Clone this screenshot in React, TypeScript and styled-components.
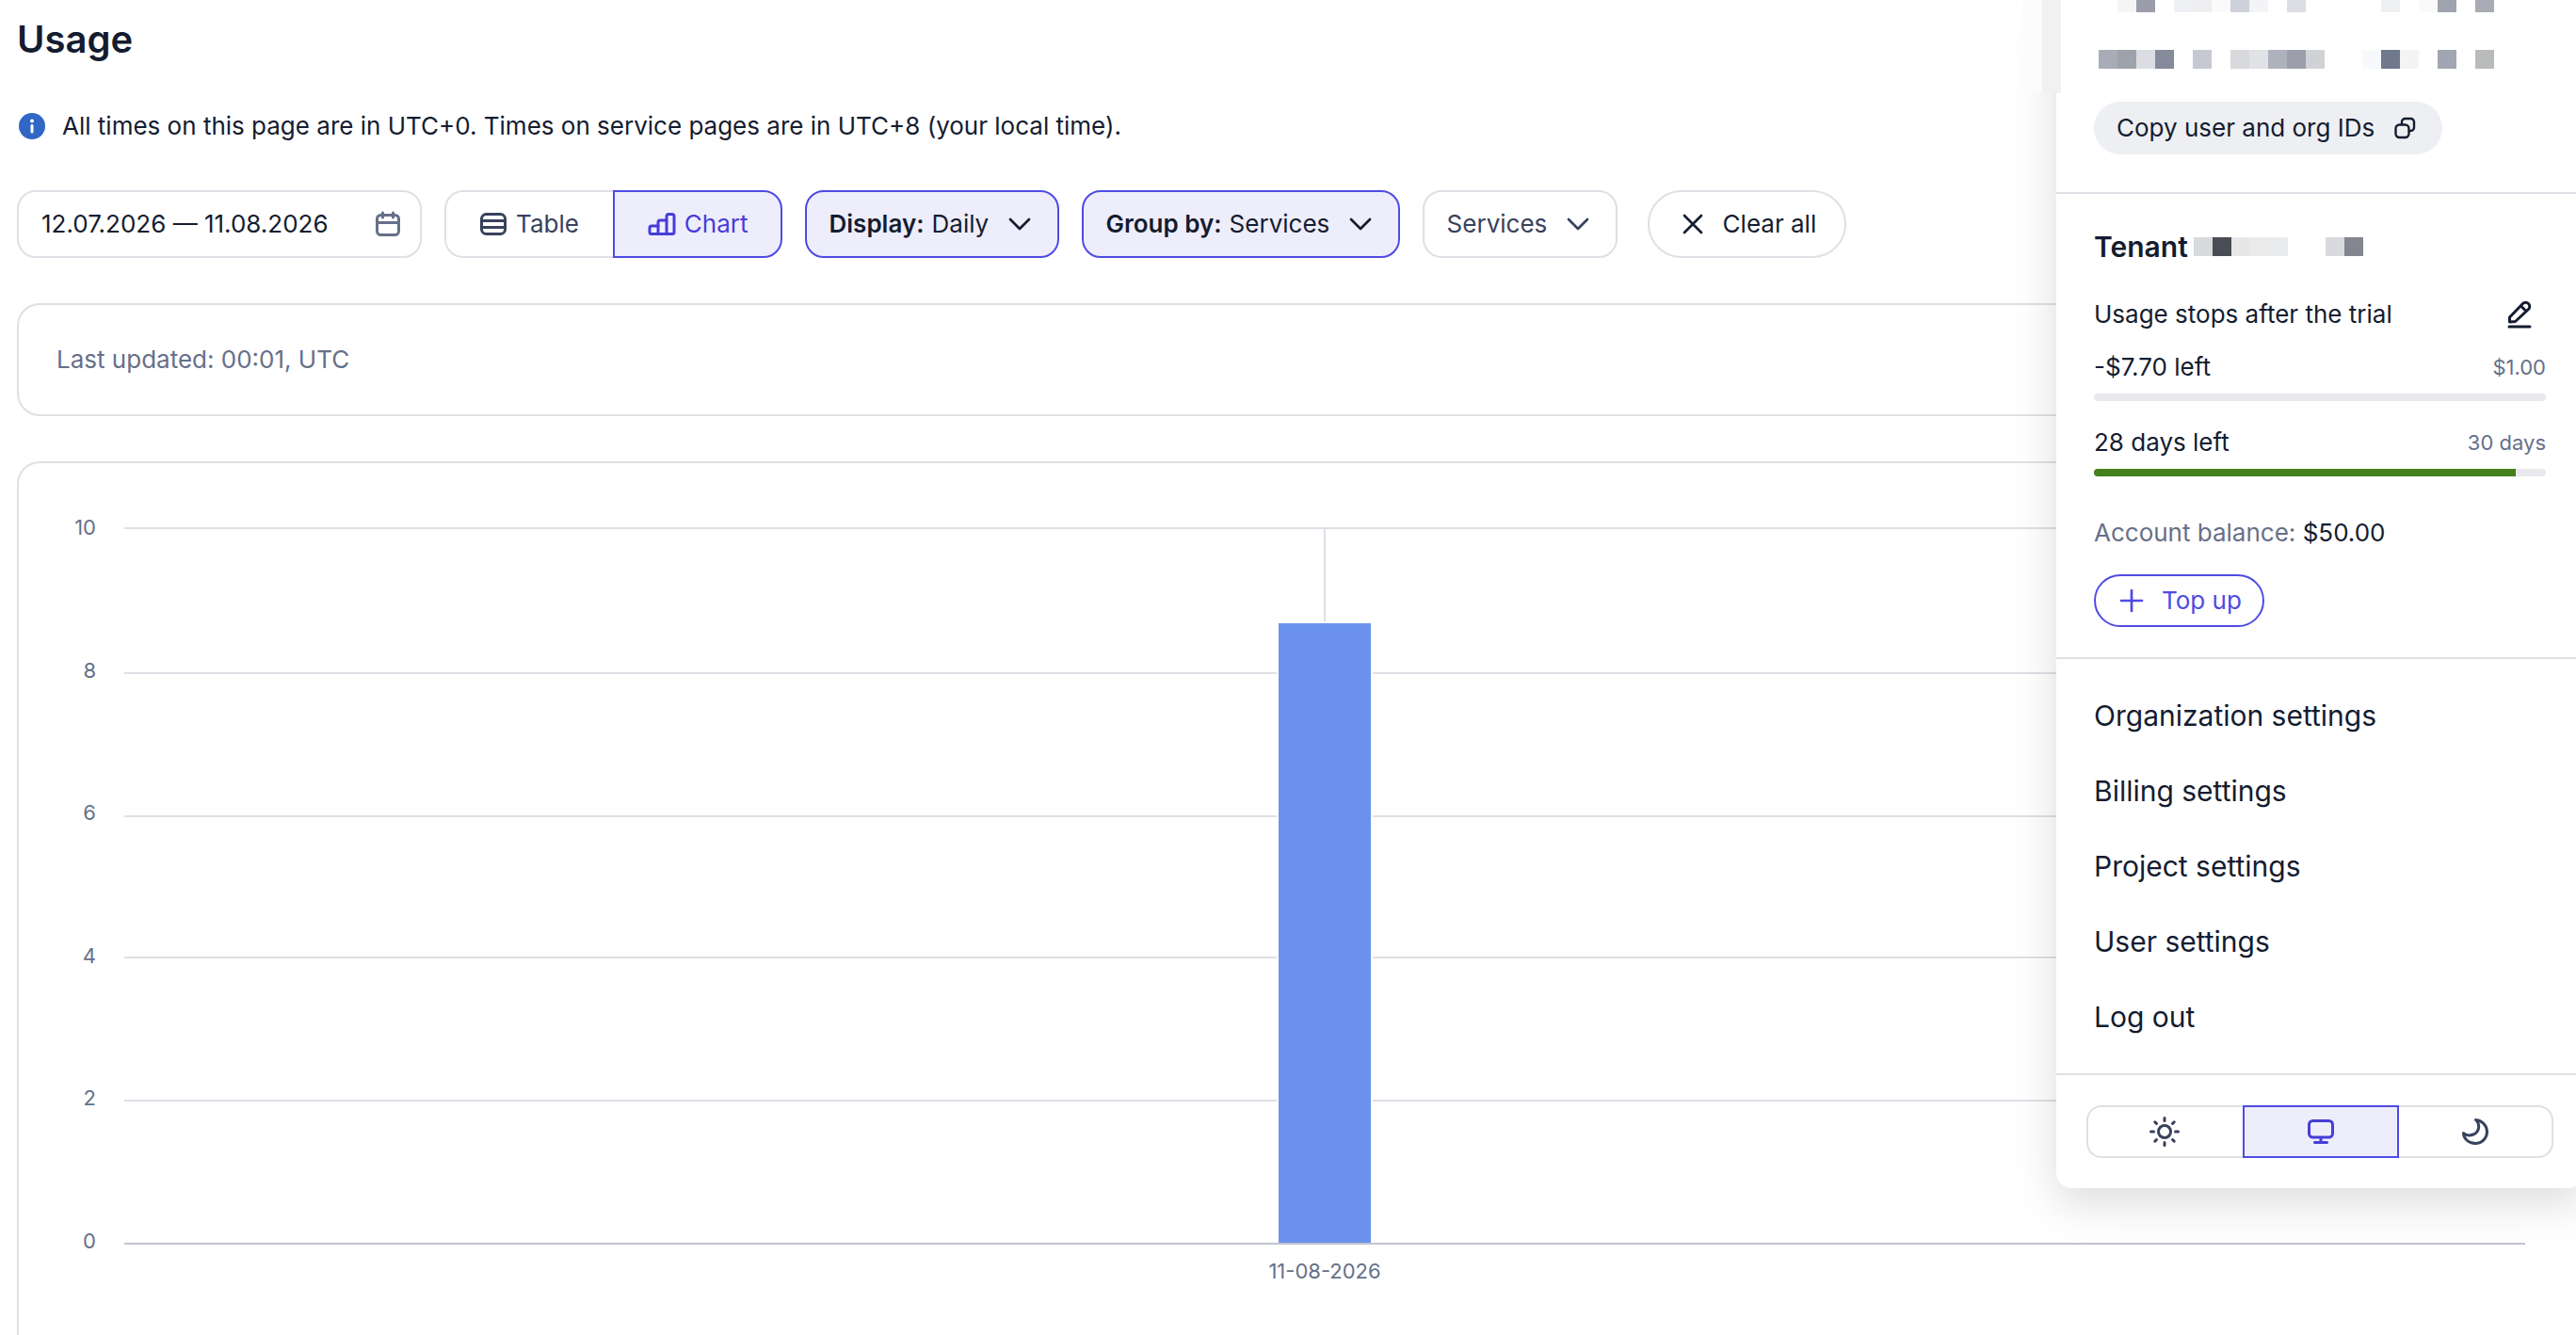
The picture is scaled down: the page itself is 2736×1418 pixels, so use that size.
import React, { useState } from "react";
import styled, { createGlobalStyle, css } from "styled-components";

const c = {
  text: "#141c30",
  soft: "#38415c",
  muted: "#667089",
  line: "#dfdfe6",
  accent: "#4f4be4",
  accentText: "#463dd8",
  accentBg: "#eeedfb",
};

const GlobalStyle = createGlobalStyle`
  *, *::before, *::after { box-sizing: border-box; }
  body {
    margin: 0;
    background: #ffffff;
    color: ${c.text};
    font-family: Inter, "Liberation Sans", sans-serif;
    font-size: 26px;
    line-height: 40px;
  }
  button, input, select { font: inherit; color: inherit; }
`;

const Page = styled.div`
  position: relative;
  height: 100vh;
  overflow: hidden;
`;

const Main = styled.main`
  display: flex;
  flex-direction: column;
  gap: 48px;
  padding: 18px 0 0 18px;
`;

const Title = styled.h1`
  margin: 0;
  font-size: 40px;
  line-height: 48px;
  font-weight: 600;
`;

const Notice = styled.p`
  display: flex;
  align-items: center;
  gap: 16px;
  margin: 0;
`;

const Toolbar = styled.div`
  display: flex;
  gap: 24px;
`;

const control = css`
  display: flex;
  align-items: center;
  height: 72px;
  border: 2px solid ${c.line};
  border-radius: 20px;
  background: #ffffff;
`;

const DateField = styled.label`
  ${control}
  width: 430px;
  padding: 0 18px 0 24px;
  svg { color: ${c.muted}; }
`;

const DateInput = styled.input`
  flex: 1;
  min-width: 0;
  padding: 0;
  border: 0;
  outline: 0;
  background: transparent;
`;

const Segments = styled.div`
  display: flex;
`;

const Segment = styled.button<{ $active: boolean; $small?: boolean }>`
  display: flex;
  flex: ${(p) => (p.$small ? "1 1 0" : "none")};
  align-items: center;
  justify-content: center;
  gap: 8px;
  height: ${(p) => (p.$small ? 56 : 72)}px;
  padding: 0 34px;
  border: 2px solid ${(p) => (p.$active ? c.accent : c.line)};
  background: ${(p) => (p.$active ? c.accentBg : "#ffffff")};
  color: ${(p) => (p.$active ? c.accentText : c.soft)};
  cursor: pointer;
  &:first-child {
    padding-right: 36px;
    border-right-width: ${(p) => (p.$active ? 2 : 0)}px;
    border-radius: ${(p) => (p.$small ? 16 : 20)}px 0 0 ${(p) => (p.$small ? 16 : 20)}px;
  }
  &:last-child {
    border-left-width: ${(p) => (p.$active ? 2 : 0)}px;
    border-radius: 0 ${(p) => (p.$small ? 16 : 20)}px ${(p) => (p.$small ? 16 : 20)}px 0;
  }
`;

const Filter = styled.label<{ $active?: boolean }>`
  ${control}
  padding: 0 24px;
  color: ${(p) => (p.$active ? c.text : c.soft)};
  ${(p) => p.$active && `border-color: ${c.accent}; background: ${c.accentBg};`}
`;

const FilterName = styled.span`
  margin-right: 8px;
  font-weight: 600;
`;

const FilterSelect = styled.select`
  appearance: none;
  margin: 0 16px 0 0;
  padding: 0;
  border: 0;
  outline: 0;
  background: transparent;
`;

const ClearButton = styled.button`
  ${control}
  gap: 16px;
  margin-left: 8px;
  padding: 0 30px;
  border-radius: 36px;
  cursor: pointer;
`;

const Card = styled.section`
  border: 2px solid ${c.line};
  border-right: 0;
  border-radius: 24px 0 0 24px;
`;

const UpdatedCard = styled(Card)`
  padding: 38px 40px;
  color: ${c.muted};
`;

const ChartCard = styled(Card)`
  flex: none;
  padding: 0 54px 0 112px;
`;

const ChartSvg = styled.svg`
  display: block;
  width: 100%;
  height: 1000px;
  overflow: visible;
  font-size: 22px;
  fill: ${c.muted};
`;

const Panel = styled.aside`
  position: absolute;
  top: 0;
  right: -8px;
  width: 560px;
  border-radius: 0 0 16px 16px;
  background: #ffffff;
  box-shadow: 0 16px 48px rgba(0, 0, 0, 0.14);
`;

const EdgeMosaic = styled.div`
  position: absolute;
  top: 0;
  left: -35px;
  display: flex;
  height: 99px;
`;

const Identity = styled.div`
  display: flex;
  flex-direction: column;
  align-items: flex-start;
  padding: 0 40px 40px;
  border-bottom: 2px solid ${c.line};
`;

const Mosaic = styled.div<{ $short?: boolean }>`
  display: flex;
  height: ${(p) => (p.$short ? 13 : 20)}px;
`;

const Names = styled.div`
  display: flex;
  flex-direction: column;
  gap: 40px;
  padding: 0 0 35px 5px;
`;

const Cell = styled.span<{ $color: string }>`
  width: 20px;
  background: ${(p) => p.$color};
`;

const Pill = styled.button<{ $outlined?: boolean }>`
  display: flex;
  align-items: center;
  align-self: flex-start;
  gap: 16px;
  height: 56px;
  padding: 0 22px;
  border: 2px solid ${(p) => (p.$outlined ? c.accent : "#eeeff2")};
  border-radius: 28px;
  background: ${(p) => (p.$outlined ? "#ffffff" : "#eeeff2")};
  color: ${(p) => (p.$outlined ? c.accent : c.text)};
  cursor: pointer;
`;

const Billing = styled.section`
  display: flex;
  flex-direction: column;
  padding: 36px 40px 32px;
  border-bottom: 2px solid ${c.line};
`;

const Tenant = styled.h2`
  display: flex;
  align-items: center;
  gap: 6px;
  margin: 0 0 32px;
  font-size: 30px;
  line-height: 40px;
  font-weight: 600;
`;

const Row = styled.div`
  display: flex;
  align-items: center;
  justify-content: space-between;
`;

const StopRow = styled(Row)`
  margin-bottom: 16px;
`;

const EditButton = styled.button`
  display: flex;
  padding: 0;
  margin-right: 12px;
  border: 0;
  background: transparent;
  cursor: pointer;
`;

const Limit = styled.span`
  color: ${c.muted};
  font-size: 22px;
`;

const Track = styled.div`
  height: 8px;
  margin: 8px 0 24px;
  border-radius: 4px;
  overflow: hidden;
  background: #e8e8ed;
`;

const Fill = styled.div`
  height: 100%;
  background: #44801b;
`;

const Balance = styled.p`
  margin: 16px 0 24px;
  color: ${c.muted};
  strong { color: ${c.text}; font-weight: 400; }
`;

const Menu = styled.nav`
  display: flex;
  flex-direction: column;
  padding: 20px 40px;
  border-bottom: 2px solid ${c.line};
`;

const MenuLink = styled.a`
  color: ${c.text};
  font-size: 30px;
  line-height: 80px;
  text-decoration: none;
`;

const ThemeBar = styled.div`
  padding: 32px;
`;

const IconSvg = styled.svg`
  flex: none;
  width: 32px;
  height: 32px;
  fill: none;
  stroke: currentColor;
  stroke-width: 3;
  stroke-linecap: round;
  stroke-linejoin: round;
`;

const icons: Record<string, React.ReactNode> = {
  calendar: <><rect x="4.500" y="6.500" width="23" height="21" rx="4" /><path d="M4.500 14.500h23M10.500 4v5M21.500 4v5" /></>,
  table: <><rect x="3.500" y="5.500" width="25" height="21" rx="5" /><path d="M4 12.500h24M4 19.500h24" /></>,
  chart: <><path d="M12 26.500H5a2 2 0 0 1-2-2V20a2 2 0 0 1 2-2h7" /><path d="M21 26.500h-9V14a2 2 0 0 1 2-2h7" /><path d="M21 26.500V8a2.500 2.500 0 0 1 2.500-2.500h3A2.500 2.500 0 0 1 29 8v16.500a2 2 0 0 1-2 2z" /></>,
  down: <path d="M6 11l10 10 10-10" strokeWidth="2.700" />,
  close: <path d="M7 7l18 18M25 7L7 25" strokeWidth="2.700" />,
  plus: <path d="M16 5v22M5 16h22" strokeWidth="2.700" />,
  copy: <><rect x="6.500" y="12.500" width="14" height="13.500" rx="4" strokeWidth="2.400" /><path d="M13 12V9.500A3.500 3.500 0 0 1 16.500 6h6A3.500 3.500 0 0 1 26 9.500v6a3.500 3.500 0 0 1-3.500 3.500h-1.500" strokeWidth="2.400" /></>,
  edit: <><path d="M5 29h22M5.500 24v-5L19.500 4.500a4 4 0 0 1 6 6L11.500 23.500zM17.500 7l5.500 5.500" /></>,
  sun: <><circle cx="16" cy="16" r="6.500" /><path d="M16 1.500v3M16 27.500v3M1.500 16h3M27.500 16h3M5.800 5.800l1.600 1.600M24.600 24.600l1.600 1.600M26.200 5.800l-1.600 1.600M7.400 24.600l-1.600 1.600" /></>,
  monitor: <><rect x="3.500" y="4.500" width="25" height="17.500" rx="4" /><path d="M16 22.500v5M9.500 27.500h13" /></>,
  moon: <path d="M16.500 3.500c6.500.5 12 6 12 12.500 0 7-5.500 12.500-12.500 12.500S3.500 23.500 3.500 17.500c2.500 2.300 6.500 3 10.500 1.500 6.500-2.500 7.500-11 2.500-15.500z" />,
};

const Icon = ({ name }: { name: string }) => (
  <IconSvg viewBox="0 0 32 32" aria-hidden="true">{icons[name]}</IconSvg>
);

const InfoIcon = () => (
  <svg width="32" height="32" viewBox="0 0 32 32" aria-hidden="true">
    <circle cx="16" cy="16" r="14" fill="#3067c6" />
    <circle cx="16" cy="10.500" r="2" fill="#ffffff" />
    <path d="M16 15.500v6.500" stroke="#ffffff" strokeWidth="3" strokeLinecap="round" />
  </svg>
);

const none = "transparent";
const nameRows = [
  [none, "#f5f5f7", "#9b9dab", none, "#eff0f3", "#eeeef0", "#fafafa", "#cfd2db", "#f3f4f7", none, "#dddee5",
    none, none, none, none, "#eff0f2", none, "#fafafa", "#9fa3ae", none, "#a9abb5"],
  ["#a8acb7", "#9ea2ab", "#dcdde3", "#868b9b", none, "#c7c9d2", none, "#d8d9dd", "#e1e2e6", "#aeb2bd", "#9c9fab",
    "#d1d2d6", none, none, "#f7f9fc", "#70788b", "#f4f4f4", none, "#a2a6b2", none, "#b9baba"],
];
const tenantCells = ["#d9dade", "#4a4d55", "#e7e7e7", "#ebebeb", "#eaebed", none, none, "#d8dadf", "#83858f"];

const Cells = ({ colors }: { colors: string[] }) => (
  <>{colors.map((color, i) => <Cell key={i} $color={color} />)}</>
);

const ticks = [
  { value: 10, y: 69 },
  { value: 8, y: 223 },
  { value: 6, y: 375 },
  { value: 4, y: 525 },
  { value: 2, y: 677 },
  { value: 0, y: 829 },
];

const UsageChart = () => (
  <ChartSvg role="img" aria-label="Daily usage by service">
    {ticks.map((t) => (
      <g key={t.value}>
        <line x1="0" x2="100%" y1={t.y} y2={t.y} stroke={t.value ? c.line : "#c1c4cf"} strokeWidth="2" />
        <text x="-30" y={Math.round(76 + (10 - t.value) * 75.8)} textAnchor="end">{t.value}</text>
      </g>
    ))}
    <svg x="50%" overflow="visible">
      <line x1="0" x2="0" y1="70" y2="168" stroke={c.line} strokeWidth="2" />
      <rect x="-51" y="168" width="102" height="660" fill="#ffffff" />
      <rect x="-49" y="170" width="98" height="658" fill="#6b93ee" />
      <text x="0" y="866" textAnchor="middle">11-08-2026</text>
    </svg>
  </ChartSvg>
);

const menuItems = ["Organization settings", "Billing settings", "Project settings", "User settings", "Log out"];

const themes = [
  { id: "Light", icon: "sun" },
  { id: "System", icon: "monitor" },
  { id: "Dark", icon: "moon" },
];

export default function App() {
  const [view, setView] = useState("Chart");
  const [theme, setTheme] = useState("System");
  return (
    <Page>
      <GlobalStyle />
      <Main>
        <Title>Usage</Title>
        <Notice>
          <InfoIcon />
          All times on this page are in UTC+0. Times on service pages are in UTC+8 (your local time).
        </Notice>
        <Toolbar>
          <DateField>
            <DateInput aria-label="Period" defaultValue="12.07.2026 — 11.08.2026" />
            <Icon name="calendar" />
          </DateField>
          <Segments role="group" aria-label="View">
            {["Table", "Chart"].map((v) => (
              <Segment key={v} type="button" $active={view === v} aria-pressed={view === v} onClick={() => setView(v)}>
                <Icon name={v.toLowerCase()} />
                {v}
              </Segment>
            ))}
          </Segments>
          <Filter $active>
            <FilterName>Display:</FilterName>
            <FilterSelect><option>Daily</option></FilterSelect>
            <Icon name="down" />
          </Filter>
          <Filter $active>
            <FilterName>Group by:</FilterName>
            <FilterSelect><option>Services</option></FilterSelect>
            <Icon name="down" />
          </Filter>
          <Filter>
            <FilterSelect aria-label="Services"><option>Services</option></FilterSelect>
            <Icon name="down" />
          </Filter>
          <ClearButton type="button">
            <Icon name="close" />
            Clear all
          </ClearButton>
        </Toolbar>
        <UpdatedCard>Last updated: 00:01, UTC</UpdatedCard>
        <ChartCard>
          <UsageChart />
        </ChartCard>
      </Main>
      <Panel>
        <Identity>
          <Names>
            <Mosaic $short><Cells colors={nameRows[0]} /></Mosaic>
            <Mosaic><Cells colors={nameRows[1]} /></Mosaic>
          </Names>
          <Pill type="button">
            Copy user and org IDs
            <Icon name="copy" />
          </Pill>
        </Identity>
        <Billing>
          <Tenant>
            Tenant
            <Mosaic><Cells colors={tenantCells} /></Mosaic>
          </Tenant>
          <StopRow>
            Usage stops after the trial
            <EditButton type="button" aria-label="Edit limit"><Icon name="edit" /></EditButton>
          </StopRow>
          <Row>-$7.70 left<Limit>$1.00</Limit></Row>
          <Track><Fill style={{ width: "0%" }} /></Track>
          <Row>28 days left<Limit>30 days</Limit></Row>
          <Track><Fill style={{ width: `${(28 / 30) * 100}%` }} /></Track>
          <Balance>Account balance: <strong>$50.00</strong></Balance>
          <Pill type="button" $outlined>
            <Icon name="plus" />
            Top up
          </Pill>
        </Billing>
        <Menu>
          {menuItems.map((item) => <MenuLink key={item} href="#">{item}</MenuLink>)}
        </Menu>
        <ThemeBar>
          <Segments role="group" aria-label="Theme">
            {themes.map((t) => (
              <Segment key={t.id} type="button" $small $active={theme === t.id} aria-pressed={theme === t.id}
                aria-label={t.id} onClick={() => setTheme(t.id)}>
                <Icon name={t.icon} />
              </Segment>
            ))}
          </Segments>
        </ThemeBar>
        <EdgeMosaic>
          <Cell $color="#fbfbfb" />
          <Cell $color="#f1f1f1" />
        </EdgeMosaic>
      </Panel>
    </Page>
  );
}
